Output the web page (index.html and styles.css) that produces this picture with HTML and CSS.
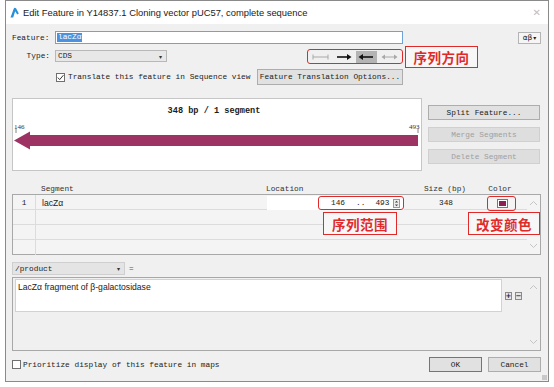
FILE: index.html
```html
<!DOCTYPE html>
<html lang="en">
<head>
<meta charset="UTF-8" />
<title>Edit Feature</title>
<link rel="stylesheet" href="styles.css">
</head>
<body>
<div class="window">
  <div class="titlebar">
    <svg class="app-icon" width="9" height="11" viewBox="0 0 9 11"><path d="M0.5 10.5 L3.6 2 Q4.6 -0.2 6.2 1.6 L8.8 6.4 L7.2 7.4 L5.2 4.2 L3.2 10.5 Z" fill="#2b8fd8"/></svg>
    <span class="title">Edit Feature in Y14837.1 Cloning vector pUC57, complete sequence</span>
    <span class="close">✕</span>
  </div>

  <div class="content">
    <!-- name -->
    <div class="row row-feature">
      <label class="lbl">Feature:</label>
      <div class="text-input"><span class="sel">lacZα</span></div>
      <div class="alpha-btn">αβ <span class="tiny-caret">▾</span></div>
    </div>

    <!-- type + direction -->
    <div class="row row-type">
      <label class="lbl lbl-right">Type:</label>
      <div class="combo combo-type"><span>CDS</span><span class="caret">▾</span></div>
      <div class="dir-group">
        <span class="dir-btn">
          <svg width="21" height="12" viewBox="0 0 21 12"><path d="M3 6 H18 M3 3.5 V8.5 M18 3.5 V8.5" stroke="#a8a8a8" stroke-width="1" fill="none"/></svg>
        </span>
        <span class="dir-btn">
          <svg width="21" height="12" viewBox="0 0 21 12"><path d="M4 6 H15" stroke="#111" stroke-width="1.6"/><path d="M14 3 L18.5 6 L14 9 Z" fill="#111"/></svg>
        </span>
        <span class="dir-btn is-on">
          <svg width="21" height="12" viewBox="0 0 21 12"><path d="M6 6 H17" stroke="#111" stroke-width="1.6"/><path d="M7 3 L2.5 6 L7 9 Z" fill="#111"/></svg>
        </span>
        <span class="dir-btn">
          <svg width="21" height="12" viewBox="0 0 21 12"><path d="M5 6 H16" stroke="#a8a8a8" stroke-width="1"/><path d="M6 3.5 L2.5 6 L6 8.5 Z M15 3.5 L18.5 6 L15 8.5 Z" fill="#a8a8a8"/></svg>
        </span>
      </div>
      <div class="note note-dir">序列方向</div>
    </div>

    <!-- translate -->
    <div class="row row-check">
      <div class="check-wrap">
        <span class="checkbox is-checked">
          <svg width="9" height="9" viewBox="0 0 9 9"><path d="M1.8 4.6 L3.7 6.6 L7.4 2.2" stroke="#333" stroke-width="1" fill="none"/></svg>
        </span>
        <span>Translate this feature in Sequence view</span>
      </div>
      <div class="btn btn-options">Feature Translation Options...</div>
    </div>

    <!-- map + segment buttons -->
    <div class="row row-map">
      <div class="map">
        <div class="map-title">348 bp / 1 segment</div>
        <span class="pos pos-start">146</span>
        <span class="pos pos-end">493</span>
        <svg class="map-arrow" width="408" height="20" viewBox="0 0 408 20">
          <path d="M3 0 V5 M405 0 V5" stroke="#666" stroke-width="0.8"/>
          <path d="M1 12.5 L17 3.5 L17 7 L405 7 L405 18 L17 18 L17 21.5 Z" fill="#9c3363"/>
        </svg>
      </div>
      <div class="seg-buttons">
        <div class="btn btn-side">Split Feature...</div>
        <div class="btn btn-side is-disabled">Merge Segments</div>
        <div class="btn btn-side is-disabled">Delete Segment</div>
      </div>
    </div>

    <!-- segments table -->
    <div class="seg-head">
      <span></span>
      <span class="col-name">Segment</span>
      <span>Location</span>
      <span class="col-mid">Size (bp)</span>
      <span class="col-mid">Color</span>
    </div>
    <div class="seg-table">
      <div class="seg-rows">
        <div class="seg-row">
          <span class="col-num">1</span>
          <span class="col-name sans">lacZα</span>
          <span class="loc">
            <span class="ring loc-ring">
              <span>146</span><span class="dots">..</span><span>493</span>
              <span class="spinner">
                <svg width="7" height="9" viewBox="0 0 7 9"><rect x="0.5" y="0.5" width="6" height="8" fill="#eee" stroke="#999"/><path d="M1.8 3.6 L3.5 1.8 L5.2 3.6 Z M1.8 5.4 L3.5 7.2 L5.2 5.4 Z" fill="#444"/></svg>
              </span>
            </span>
          </span>
          <span class="col-mid">348</span>
          <span class="col-mid">
            <span class="ring color-ring"><span class="swatch"></span></span>
          </span>
        </div>
        <div class="seg-row"><span class="col-num"></span></div>
        <div class="seg-row"><span class="col-num"></span></div>
        <div class="seg-row"><span class="col-num"></span></div>
      </div>
      <div class="vscroll">
        <svg width="9" height="6" viewBox="0 0 9 6"><path d="M1 5 L4.5 1.5 L8 5" stroke="#c4c4c4" fill="none"/></svg>
        <svg width="9" height="6" viewBox="0 0 9 6"><path d="M1 1 L4.5 4.5 L8 1" stroke="#c4c4c4" fill="none"/></svg>
      </div>
      <div class="note note-range">序列范围</div>
      <div class="note note-color">改变颜色</div>
    </div>

    <!-- qualifiers -->
    <div class="row row-qual">
      <div class="combo combo-qual"><span>/product</span><span class="caret">▾</span></div>
      <span class="eq">=</span>
    </div>
    <div class="qual-panel">
      <div class="qual-text sans">LacZα fragment of β-galactosidase</div>
      <div class="qual-tools">
        <span class="mini-btn">+</span><span class="mini-btn">−</span>
      </div>
      <div class="vscroll vscroll-qual">
        <svg width="9" height="6" viewBox="0 0 9 6"><path d="M1 5 L4.5 1.5 L8 5" stroke="#c4c4c4" fill="none"/></svg>
        <svg width="9" height="6" viewBox="0 0 9 6"><path d="M1 1 L4.5 4.5 L8 1" stroke="#c4c4c4" fill="none"/></svg>
      </div>
    </div>

    <!-- footer -->
    <div class="row row-foot">
      <span class="checkbox"></span>
      <span class="foot-label">Prioritize display of this feature in maps</span>
      <div class="btn btn-ok">OK</div>
      <div class="btn btn-cancel">Cancel</div>
    </div>
  </div>
  <span class="grip"></span>
</div>
</body>
</html>
```

FILE: styles.css
```css
/* dialog */
* { box-sizing: border-box; }
body { margin: 0; background: #fff; font-family: "Liberation Mono", monospace; font-size: 7.8px; color: #1c1c1c; }
.window { position: relative; margin-left: 5px; width: 544px; height: 382px; border: 1px solid #8a8a8a; background: #f0f0f0; display: flex; flex-direction: column; }
.titlebar { height: 23px; flex: none; background: #fff; display: flex; align-items: center; padding-left: 4px; }
.app-icon { margin-right: 4px; }
.title { font-family: "Liberation Sans", sans-serif; font-size: 9.4px; color: #1a1a1a; }
.close { margin-left: auto; margin-right: 7px; color: #c0c0c0; font-family: "DejaVu Sans", sans-serif; font-size: 10px; }

.content { flex: 1; padding: 7px 7px 0 6px; display: flex; flex-direction: column; }
.row { display: flex; flex: none; }
.sans { font-family: "Liberation Sans", sans-serif; font-size: 8.6px; }

/* feature / type */
.row-feature { height: 13px; align-items: center; }
.lbl { width: 43px; }
.lbl-right { text-align: right; padding-right: 5px; }
.text-input { width: 348px; height: 13px; border: 1px solid #6fa3d8; background: #fff; padding: 1px 1px; display: flex; align-items: center; }
.sel { background: #4a92e0; color: #fff; padding: 0 1px; line-height: 9px; }
.alpha-btn { margin-left: auto; width: 23px; height: 12px; border: 1px solid #b4b4b4; background: #f5f5f5; font-family: "DejaVu Sans", sans-serif; font-size: 7.5px; display: flex; align-items: center; justify-content: center; }
.tiny-caret { font-size: 6px; margin-left: 1px; }

.row-type { height: 22px; margin-top: 2px; align-items: flex-start; }
.row-type .lbl { margin-top: 6px; }
.combo { height: 12px; border: 1px solid #b8b8b8; background: #e8e8e8; display: flex; align-items: center; padding-left: 2px; padding-right: 4px; }
.combo .caret { margin-left: auto; font-family: "DejaVu Sans", sans-serif; font-size: 6px; color: #333; }
.combo-type { width: 112px; margin-top: 4px; }
.dir-group { margin-left: 140px; margin-top: 3px; width: 96px; height: 15px; border: 1.5px solid #e02a2a; border-radius: 3px; display: flex; align-items: center; gap: 2px; padding-left: 1.5px; }
.dir-btn { width: 21px; height: 12px; display: flex; }
.dir-btn.is-on { background: #b4b4b4; }

.note { position: relative; height: 22px; border: 1.5px solid #e02a2a; background: #f7f7f7; color: #e02a2a; font-family: "Noto Sans CJK SC", sans-serif; font-weight: 700; font-size: 13.5px; display: flex; align-items: center; justify-content: center; letter-spacing: 0.5px; }
.note-dir { width: 73px; margin-left: 2px; }

.row-check { height: 16px; margin-top: 1px; align-items: center; }
.check-wrap { width: 245px; display: flex; align-items: center; padding-left: 44px; }
.checkbox { width: 9px; height: 9px; border: 1px solid #707070; background: #fff; display: inline-flex; margin-right: 3px; flex: none; }
.checkbox svg { margin: -1px; }
.btn { height: 16px; border: 1px solid #adadad; background: #e1e1e1; display: flex; align-items: center; justify-content: center; }
.btn-options { width: 146px; }

/* map */
.row-map { margin-top: 13px; height: 73px; }
.map { position: relative; width: 410px; height: 73px; border: 1px solid #c6c6c6; background: #fff; }
.map-title { text-align: center; font-weight: 700; font-size: 8.6px; margin-top: 7px; padding-right: 6px; }
.pos { position: absolute; top: 24px; font-family: "Liberation Serif", serif; font-size: 7px; color: #333; }
.pos-start { left: 1px; }
.pos-end { left: 396px; }
.map-arrow { position: absolute; left: 0; top: 29px; overflow: visible; }
.seg-buttons { margin-left: 6px; padding-top: 7px; display: flex; flex-direction: column; gap: 7px; }
.btn-side { width: 112px; height: 15px; }
.btn-side.is-disabled { background: #dedede; border-color: #d0d0d0; color: #a0a0a0; }

/* segments */
.seg-head { display: grid; grid-template-columns: 23px 231px 150px 58px 52px; height: 11px; margin-top: 12px; align-items: center; color: #333; flex: none; }
.col-name { padding-left: 6px; }
.col-mid { text-align: center; display: flex; justify-content: center; align-items: center; }
.seg-table { position: relative; display: flex; height: 61px; border: 1px solid #a8a8a8; background: #f4f4f4; flex: none; }
.seg-rows { flex: 1; }
.seg-row { display: grid; grid-template-columns: 23px 231px 150px 58px 52px; height: 15px; border-bottom: 1px solid #dcdcdc; align-items: center; }
.seg-row:last-child { border-bottom: none; }
.col-num { height: 100%; border-right: 1px solid #dcdcdc; display: flex; align-items: center; justify-content: center; }
.loc { height: 14px; width: 137px; background: #fff; display: flex; justify-content: flex-end; }
.ring { border: 1.5px solid #e02a2a; border-radius: 3px; }
.loc-ring { width: 86px; height: 14px; display: flex; align-items: center; padding-left: 12px; }
.dots { margin: 0 10px 0 11px; }
.spinner { display: flex; margin-left: 4px; }
.color-ring { width: 29px; height: 15px; margin-top: 1px; display: flex; align-items: center; justify-content: center; padding-left: 2px; }
.swatch { width: 11px; height: 9px; border: 1px solid #777; background: #8e1f52; box-shadow: inset 0 0 0 1px #fff; }
.vscroll { width: 13px; display: flex; flex-direction: column; justify-content: space-between; align-items: center; padding: 5px 0 5px; }
.note-range { position: absolute; left: 310px; top: 17px; width: 74px; height: 23px; }
.note-color { position: absolute; left: 455px; top: 17px; width: 72px; height: 23px; }

/* qualifiers */
.row-qual { margin-top: 7px; height: 13px; align-items: center; }
.combo-qual { width: 113px; height: 13px; background: #e4e4e4; border-color: #cfcfcf; }
.eq { margin-left: 4px; color: #555; }
.qual-panel { display: flex; margin-top: 2px; height: 74px; border: 1px solid #a8a8a8; background: #f0f0f0; flex: none; }
.qual-text { width: 487px; height: 33px; margin: 1px 0 0 2px; background: #fff; border: 1px solid #d2d2d2; padding: 1px 2px; line-height: 12px; color: #222; }
.qual-tools { margin: 14px 0 0 3px; display: flex; gap: 3px; align-items: flex-start; }
.mini-btn { width: 7px; height: 8px; border: 1px solid #8a8a8a; background: #e6e6e6; font-family: "DejaVu Sans", sans-serif; font-weight: 700; font-size: 7px; line-height: 6px; display: flex; justify-content: center; }
.vscroll-qual { margin-left: auto; padding: 6px 0 5px; }

/* footer */
.row-foot { margin-top: 6px; height: 15px; align-items: center; }
.row-foot .checkbox { margin-right: 2px; }
.foot-label { margin-left: 0; }
.btn-ok { margin-left: auto; width: 53px; height: 15px; border-color: #2f86d6; }
.btn-cancel { margin-left: 6px; width: 53px; height: 15px; }
.grip { position: absolute; right: 1px; bottom: 1px; width: 5px; height: 5px; background: radial-gradient(circle, #999 0.6px, transparent 0.8px) 0 0 / 2px 2px; }
```
